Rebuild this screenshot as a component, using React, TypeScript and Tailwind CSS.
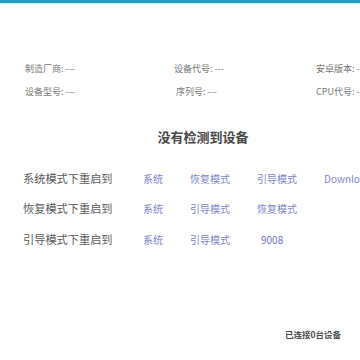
import * as React from "react";

const INFO = [
  ["制造厂商: ---", "设备代号: ---", "安卓版本: -"],
  ["设备型号: ---", "序列号: ---", "CPU代号: -"],
];

const REBOOT = [
  { label: "系统模式下重启到", actions: ["系统", "恢复模式", "引导模式", "Download"] },
  { label: "恢复模式下重启到", actions: ["系统", "引导模式", "恢复模式"] },
  { label: "引导模式下重启到", actions: ["系统", "引导模式", "9008"] },
];

const App = () => (
  <div className="h-[360px] w-[360px] overflow-hidden bg-white font-['Noto_Sans_CJK_SC','Noto_Sans',sans-serif]">
    <div className="h-[3px] bg-[#279fc5]" />
    <div className="h-[3px] bg-gradient-to-b from-[#c4eef3] to-white" />

    <div className="w-[406px]">
      <div className="flex flex-col gap-[11px] pl-[25px] pt-[57px] text-[9px] leading-[12px] text-[#777]">
        {INFO.map((row, i) => (
          <div className="grid grid-cols-[149px_142px_1fr]" key={i}>
            {row.map((cell, j) => (
              <span className={i === 1 && j === 1 ? "pl-[2px]" : ""} key={cell}>
                {cell}
              </span>
            ))}
          </div>
        ))}
      </div>

      <div className="mt-[30px] text-center text-[13px] font-semibold leading-[18px] text-[#474747]">
        没有检测到设备
      </div>

      <div className="mt-[17px] pl-[23px]">
        {REBOOT.map((row) => (
          <div className="flex h-[30.5px] items-center" key={row.label}>
            <span className="w-[120px] text-[11.2px] text-[#5a5a5a]">{row.label}</span>
            <div className="flex gap-[27px] text-[10px] text-[#8184cc]">
              {row.actions.map((a) => (
                <span className={a === "9008" ? "pl-[4px] text-[#6f73c2]" : ""} key={a}>
                  {a}
                </span>
              ))}
            </div>
          </div>
        ))}
      </div>
    </div>

    <div className="mt-[73px] flex justify-end pr-[19px] text-[8.5px] font-semibold leading-[12px] text-[#4a4a4a]">
      已连接0台设备
    </div>
  </div>
);

export default App;
